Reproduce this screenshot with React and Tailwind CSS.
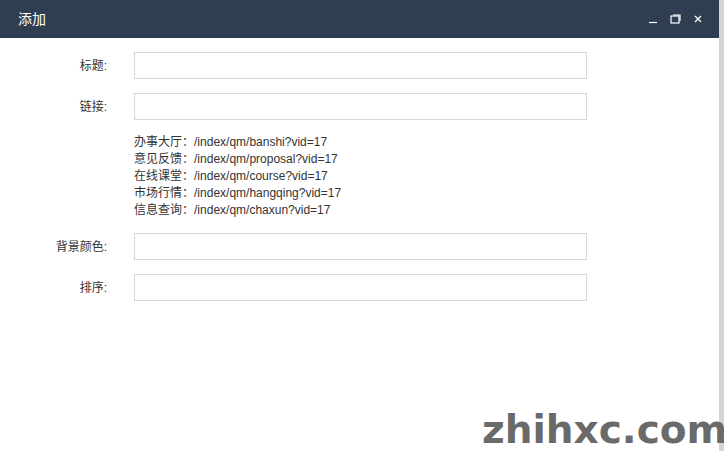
const fields = [
  { label: "标题:" },
  { label: "链接:", help: true },
  { label: "背景颜色:" },
  { label: "排序:" },
];

const links = [
  ["办事大厅", "/index/qm/banshi?vid=17"],
  ["意见反馈", "/index/qm/proposal?vid=17"],
  ["在线课堂", "/index/qm/course?vid=17"],
  ["市场行情", "/index/qm/hangqing?vid=17"],
  ["信息查询", "/index/qm/chaxun?vid=17"],
];

const font = { fontFamily: '"Liberation Sans", "Noto Sans CJK SC", sans-serif' };

export default function App() {
  return (
    <div className="relative flex h-[451px] w-[724px] overflow-hidden bg-white" style={font}>
      <div className="flex w-[719px] flex-col">
        {/* header */}
        <div className="flex h-[38px] items-center justify-between bg-[#2f3e50] pl-[18px] pr-[16px]">
          <span className="text-[14px] text-white">添加</span>
          <div className="flex items-center gap-[12px] text-white">
            <svg width="10" height="10" viewBox="0 0 10 10">
              <path d="M1 8.5h8" stroke="#fff" strokeWidth="1.2" />
            </svg>
            <svg width="11" height="10" viewBox="0 0 11 10">
              <rect x="1" y="2" width="8" height="7" fill="none" stroke="#fff" strokeWidth="1.2" />
              <path d="M3 1h7v6" fill="none" stroke="#fff" strokeWidth="1.2" />
            </svg>
            <svg width="10" height="10" viewBox="0 0 10 10">
              <path d="M2 2l6 6M8 2l-6 6" stroke="#fff" strokeWidth="1.3" />
            </svg>
          </div>
        </div>

        {/* form */}
        <div className="flex flex-col gap-[14px] pt-[14px] text-[12px] text-[#333]">
          {fields.map((f) => (
            <div key={f.label} className="flex flex-col">
              <div className="flex items-center">
                <label className="w-[107px] text-right">{f.label}</label>
                <input className="ml-[27px] h-[27px] w-[453px] border border-[#d6d6dc] bg-white outline-none" />
              </div>
              {f.help && (
                <div className="ml-[134px] mt-[14px] flex flex-col leading-[17px]">
                  {links.map(([name, url]) => (
                    <div key={url}>
                      {name}：{url}
                    </div>
                  ))}
                </div>
              )}
            </div>
          ))}
        </div>
      </div>
      <div className="w-[5px] bg-[#d5d5d5]" />

      <div
        className="absolute bottom-[-8px] left-[482px] whitespace-nowrap text-[39px] font-bold text-[#6a6a6a]"
        style={{ fontFamily: '"DejaVu Sans", sans-serif' }}
      >
        zhihxc.com
      </div>
    </div>
  );
}
